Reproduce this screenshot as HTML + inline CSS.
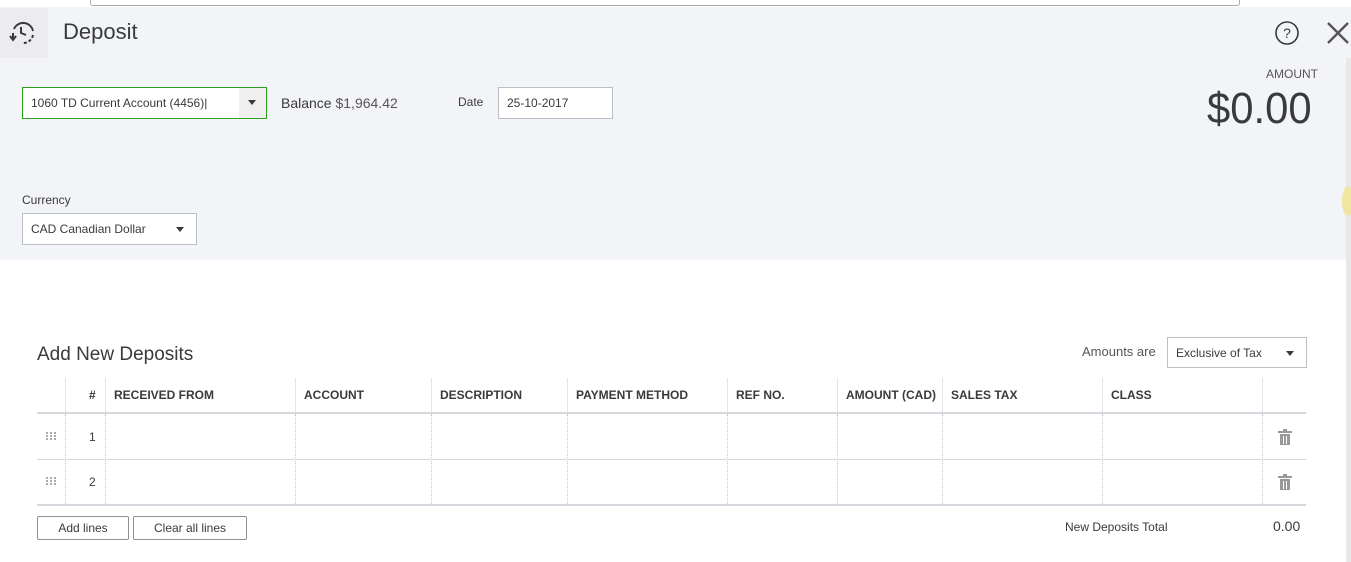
<!DOCTYPE html>
<html><head><style>
*{margin:0;padding:0;box-sizing:border-box}
body{width:1351px;height:562px;overflow:hidden;background:#fff;font-family:"Liberation Sans",sans-serif;color:#393a3d;position:relative}
.a{position:absolute}
.top{left:0;top:0;width:1351px;height:260px;background:#f3f4f8}
.inp{background:#fff;border:1px solid #babec5;font-size:12px;color:#393a3d;padding-left:8px;display:flex;align-items:center}
.hd{top:378px;height:35px;font-weight:bold;font-size:12px;color:#393a3d;line-height:35px}
.vl{width:1px;background:#e3e5e8}
.dl{width:0;border-left:1px dotted #c4c6ca}
.hl{left:37px;width:1269px;height:1px;background:#d4d7dc}
.btn{border:1px solid #8d9096;border-radius:2px;background:#fff;font-size:12px;text-align:center;line-height:22px;height:24px}
.tri{width:0;height:0;border-left:4px solid transparent;border-right:4px solid transparent;border-top:5px solid #393a3d}
</style></head><body>
<div class="a top"></div>
<div class="a" style="left:0;top:0;width:1351px;height:7px;background:#fff"></div>
<div class="a" style="left:90px;top:0;width:1150px;height:6px;border:1px solid #aaa;border-top:none;border-radius:0 0 3px 3px;background:#fff"></div>
<div class="a" style="left:1346px;top:58px;width:5px;height:504px;background:#e8e8e8"></div>
<div class="a" style="left:0;top:8px;width:48px;height:50px;background:#ececee"></div>
<svg class="a" style="left:9px;top:19px" width="28" height="28" viewBox="0 0 28 28" fill="none" stroke="#393a3d" stroke-width="2"><path d="M5 10 A10 10 0 0 1 24 12" /><path d="M24 16 A10 10 0 0 1 13 24" stroke-dasharray="3 2"/><path d="M4 14 L4 20 M1 17 L4 21 L7 17"/><path d="M12 8 L12 14 L17 16"/></svg>
<div class="a" style="left:63px;top:19px;font-size:22px;color:#393a3d">Deposit</div>
<svg class="a" style="left:1274px;top:20px" width="26" height="26" viewBox="0 0 26 26"><circle cx="13" cy="13" r="11" fill="none" stroke="#393a3d" stroke-width="1.6"/><text x="13" y="18" font-size="14" text-anchor="middle" fill="#393a3d" font-family="Liberation Sans">?</text></svg>
<svg class="a" style="left:1326px;top:21px" width="24" height="24"><path d="M2 2L22 22M22 2L2 22" stroke="#555" stroke-width="2.4"/></svg>
<div class="a inp" style="left:22px;top:87px;width:245px;height:32px;border:1px solid #2ca01c">1060 TD Current Account (4456)|</div>
<div class="a" style="left:239px;top:88px;width:27px;height:30px;background:#efefef"></div>
<div class="a tri" style="left:248px;top:100px"></div>
<div class="a" style="left:281px;top:95px;font-size:14px">Balance <span style="color:#555">$1,964.42</span></div>
<div class="a" style="left:458px;top:95px;font-size:12px">Date</div>
<div class="a inp" style="left:498px;top:87px;width:115px;height:32px">25-10-2017</div>
<div class="a" style="left:1266px;top:67px;font-size:12px;color:#555">AMOUNT</div>
<div class="a" style="left:1207px;top:84px;font-size:44px;color:#393a3d;transform:scaleX(0.95);transform-origin:left">$0.00</div>
<div class="a" style="left:22px;top:193px;font-size:12px">Currency</div>
<div class="a inp" style="left:22px;top:213px;width:175px;height:32px">CAD Canadian Dollar</div>
<div class="a tri" style="left:176px;top:227px"></div>
<div class="a" style="left:1342px;top:186px;width:12px;height:30px;border-radius:50%;background:#f0e6a0"></div>
<div class="a" style="left:37px;top:344px;font-size:19px">Add New Deposits</div>
<div class="a" style="left:1082px;top:344px;font-size:13px;color:#555">Amounts are</div>
<div class="a inp" style="left:1167px;top:337px;width:140px;height:31px">Exclusive of Tax</div>
<div class="a tri" style="left:1286px;top:351px"></div>
<div class="a hd" style="left:89px">#</div>
<div class="a hd" style="left:114px">RECEIVED FROM</div>
<div class="a hd" style="left:304px">ACCOUNT</div>
<div class="a hd" style="left:440px">DESCRIPTION</div>
<div class="a hd" style="left:576px">PAYMENT METHOD</div>
<div class="a hd" style="left:736px">REF NO.</div>
<div class="a hd" style="left:846px">AMOUNT (CAD)</div>
<div class="a hd" style="left:951px">SALES TAX</div>
<div class="a hd" style="left:1111px">CLASS</div>
<div class="a vl" style="left:65px;top:378px;height:35px"></div>
<div class="a vl" style="left:105px;top:378px;height:35px"></div>
<div class="a vl" style="left:295px;top:378px;height:35px"></div>
<div class="a vl" style="left:431px;top:378px;height:35px"></div>
<div class="a vl" style="left:567px;top:378px;height:35px"></div>
<div class="a vl" style="left:727px;top:378px;height:35px"></div>
<div class="a vl" style="left:837px;top:378px;height:35px"></div>
<div class="a vl" style="left:942px;top:378px;height:35px"></div>
<div class="a vl" style="left:1102px;top:378px;height:35px"></div>
<div class="a vl" style="left:1262px;top:378px;height:35px"></div>
<div class="a dl" style="left:65px;top:414px;height:90px"></div>
<div class="a dl" style="left:105px;top:414px;height:90px"></div>
<div class="a dl" style="left:295px;top:414px;height:90px"></div>
<div class="a dl" style="left:431px;top:414px;height:90px"></div>
<div class="a dl" style="left:567px;top:414px;height:90px"></div>
<div class="a dl" style="left:727px;top:414px;height:90px"></div>
<div class="a dl" style="left:837px;top:414px;height:90px"></div>
<div class="a dl" style="left:942px;top:414px;height:90px"></div>
<div class="a dl" style="left:1102px;top:414px;height:90px"></div>
<div class="a dl" style="left:1262px;top:414px;height:90px"></div>
<div class="a hl" style="top:412px;height:2px"></div>
<div class="a hl" style="top:459px"></div>
<div class="a hl" style="top:504px;height:2px"></div>
<svg class="a" style="left:46px;top:432px" width="10" height="8" fill="#aaa"><rect x="0" y="0" width="2" height="2"/><rect x="4" y="0" width="2" height="2"/><rect x="8" y="0" width="2" height="2"/><rect x="0" y="3" width="2" height="2"/><rect x="4" y="3" width="2" height="2"/><rect x="8" y="3" width="2" height="2"/><rect x="0" y="6" width="2" height="2"/><rect x="4" y="6" width="2" height="2"/><rect x="8" y="6" width="2" height="2"/></svg>
<svg class="a" style="left:46px;top:477px" width="10" height="8" fill="#aaa"><rect x="0" y="0" width="2" height="2"/><rect x="4" y="0" width="2" height="2"/><rect x="8" y="0" width="2" height="2"/><rect x="0" y="3" width="2" height="2"/><rect x="4" y="3" width="2" height="2"/><rect x="8" y="3" width="2" height="2"/><rect x="0" y="6" width="2" height="2"/><rect x="4" y="6" width="2" height="2"/><rect x="8" y="6" width="2" height="2"/></svg>
<div class="a" style="left:89px;top:430px;font-size:12px">1</div>
<div class="a" style="left:89px;top:475px;font-size:12px">2</div>
<svg class="a" style="left:1278px;top:429px" width="14" height="16"><rect x="0" y="2" width="14" height="2" fill="#999"/><rect x="5" y="0" width="4" height="2" fill="#999"/><rect x="2" y="5" width="10" height="11" fill="#999"/><rect x="5" y="7" width="1" height="8" fill="#fff"/><rect x="8" y="7" width="1" height="8" fill="#fff"/></svg>
<svg class="a" style="left:1278px;top:474px" width="14" height="16"><rect x="0" y="2" width="14" height="2" fill="#999"/><rect x="5" y="0" width="4" height="2" fill="#999"/><rect x="2" y="5" width="10" height="11" fill="#999"/><rect x="5" y="7" width="1" height="8" fill="#fff"/><rect x="8" y="7" width="1" height="8" fill="#fff"/></svg>
<div class="a btn" style="left:37px;top:516px;width:92px">Add lines</div>
<div class="a btn" style="left:133px;top:516px;width:114px">Clear all lines</div>
<div class="a" style="left:1065px;top:520px;font-size:12px">New Deposits Total</div>
<div class="a" style="left:1273px;top:518px;font-size:14px">0.00</div>
</body></html>
